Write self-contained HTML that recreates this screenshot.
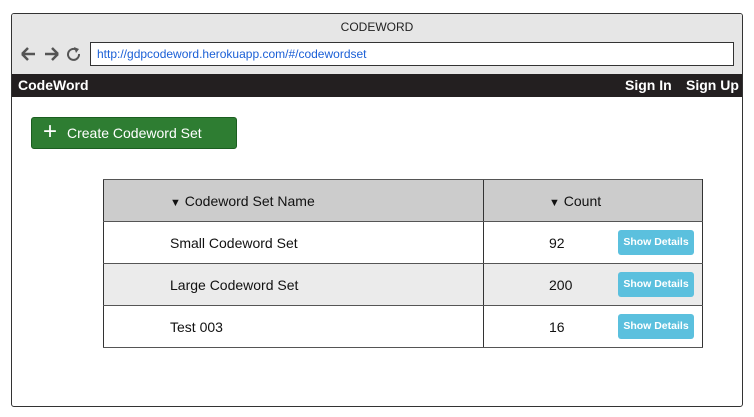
<!DOCTYPE html>
<html><head><style>
body{margin:0;width:754px;height:417px;background:#fff;font-family:"Liberation Sans",Arial,sans-serif;position:relative;overflow:hidden}
.frame{position:absolute;left:11px;top:13px;width:730px;height:392px;border:1px solid #333;border-radius:3px;overflow:hidden}
.top{position:absolute;left:0;top:0;width:730px;height:60px;background:#e6e6e6}
.title{position:absolute;top:6px;width:100%;text-align:center;font-size:12px;color:#222}
.url{position:absolute;left:78px;top:28px;width:644px;height:24px;background:#fff;border:1px solid #333;box-sizing:border-box;font-size:12px;color:#1a5fd6;line-height:22px;padding-left:6px}
.nav{position:absolute;left:0;top:60px;width:730px;height:23px;background:#231f20;color:#fff;font-weight:bold;font-size:14px;line-height:23px}
.btn{position:absolute;left:19px;top:103px;width:206px;height:32px;background:#2e7d32;border:1px solid #1b5e20;border-radius:3px;color:#fff;font-size:14px;line-height:31px;box-sizing:border-box}
table{position:absolute;left:91px;top:165px;border-collapse:collapse;font-size:14px;color:#111}
td{border:1px solid #555;border-left:none;border-right:none;padding:0;height:42px;position:relative}
td.l{border-left:1px solid #333;width:380px;padding-left:66px;box-sizing:border-box}
td.r{border-right:1px solid #333;border-left:1px solid #333;width:219px;padding-left:65px;box-sizing:border-box}
tr.h td{background:#ccc}
tr.g td{background:#ebebeb}
.t{font-size:11px}
.sd{position:absolute;left:134px;top:8px;width:76px;height:25px;background:#5bc0de;border-radius:3px;color:#fff;font-size:10.5px;font-weight:bold;text-align:center;line-height:25px}
</style></head><body>
<div class="frame">
<div class="top"><div class="title">CODEWORD</div>
<svg style="position:absolute;left:8px;top:32px" width="62" height="16" viewBox="0 0 62 16">
<path d="M2 8H15M2 8L8 2M2 8L8 14" stroke="#555" stroke-width="2.5" fill="none"/>
<path d="M38 8H25M38 8L32 2M38 8L32 14" stroke="#555" stroke-width="2.5" fill="none"/>
<path d="M59 8A5.5 5.5 0 1 1 56 3.5" stroke="#555" stroke-width="2" fill="none"/><path d="M54 1L59 3L56 7Z" fill="#555"/>
</svg>
<div class="url">http://gdpcodeword.herokuapp.com/#/codewordset</div></div>
<div class="nav"><span style="position:absolute;left:6px">CodeWord</span><span style="position:absolute;left:613px">Sign In</span><span style="position:absolute;left:674px">Sign Up</span></div>
<div class="btn"><span style="font-size:24px;font-weight:300;position:absolute;left:11px;top:-2px">+</span><span style="position:absolute;left:35px">Create Codeword Set</span></div>
<table>
<tr class="h"><td class="l"><span class="t">▼</span> Codeword Set Name</td><td class="r"><span class="t">▼</span> Count</td></tr>
<tr><td class="l">Small Codeword Set</td><td class="r">92<div class="sd">Show Details</div></td></tr>
<tr class="g"><td class="l">Large Codeword Set</td><td class="r">200<div class="sd">Show Details</div></td></tr>
<tr><td class="l">Test 003</td><td class="r">16<div class="sd">Show Details</div></td></tr>
</table>
</div>
</body></html>
